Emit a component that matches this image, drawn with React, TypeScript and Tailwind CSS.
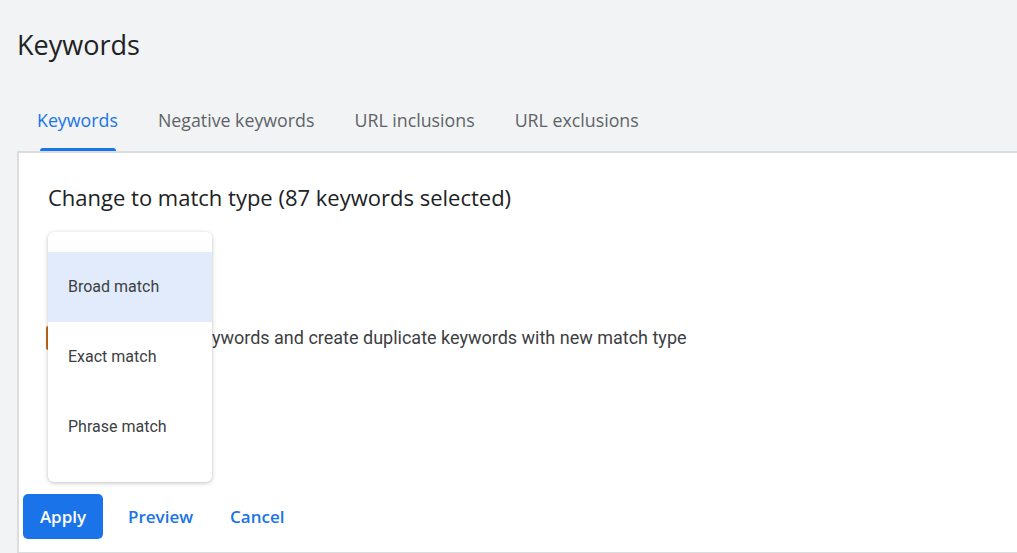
const tabs = ['Keywords', 'Negative keywords', 'URL inclusions', 'URL exclusions']

const matchTypes = ['Broad match', 'Exact match', 'Phrase match']

export default function App() {
  return (
    <div className="h-[553px] w-[1017px] overflow-hidden bg-[#f1f3f4] font-['Roboto',sans-serif]">
      <h1 className="pl-[17px] pt-[26px] font-['Open_Sans',sans-serif] text-[27px] leading-[38px] text-[#202124]">
        Keywords
      </h1>

      <div className="mt-[43px] flex pl-[37px]">
        {tabs.map((t, i) => (
          <div key={t} className="relative mr-[40px] h-[44px] font-['Open_Sans',sans-serif] text-[17.8px] font-medium leading-[26px]">
            <span className={i === 0 ? 'text-[#1a73e8]' : 'text-[#5f6368]'}>{t}</span>
            {i === 0 && (
              <div className="absolute bottom-0 left-[3px] right-[2px] h-[3px] rounded-t-[3px] bg-[#1a73e8]" />
            )}
          </div>
        ))}
      </div>

      <div className="relative ml-[17px] h-[402px] w-[1010px] border-l-2 border-t-2 border-b border-[#dadce0] bg-white">
        <div className="pl-[29px] pt-[29px]">
          <h2 className="font-['Open_Sans',sans-serif] text-[22px] leading-[30px] text-[#202124]">
            Change to match type (87 keywords selected)
          </h2>

          <div className="mt-[113px] flex items-center">
            <div className="-ml-[2px] h-[24px] w-[18px] rounded-[2px] border-2 border-[#c26a1c]" />
            <span className="ml-[21px] text-[18px] leading-[26px] text-[#3c4043]">
              Keep original keywords and create duplicate keywords with new match type
            </span>
          </div>
        </div>

        <div className="absolute bottom-[13px] left-[4px] flex items-center font-['Open_Sans',sans-serif] text-[17px] font-semibold">
          <button className="h-[45px] w-[80px] rounded-[5px] bg-[#1a73e8] text-white">Apply</button>
          <button className="ml-[25px] text-[#1a73e8]">Preview</button>
          <button className="ml-[37px] text-[#1a73e8]">Cancel</button>
        </div>

        <div className="absolute left-[29px] top-[79px] w-[164px] rounded-[6px] bg-white py-[20px] shadow-[0_1px_4px_rgba(0,0,0,0.25)]">
          {matchTypes.map((m, i) => (
            <div
              key={m}
              className={
                'flex h-[70px] items-center pl-[20px] text-[16px] text-[#3c4043] ' +
                (i === 0 ? 'bg-[#e1ebfb]' : '')
              }
            >
              {m}
            </div>
          ))}
        </div>
      </div>
    </div>
  )
}
